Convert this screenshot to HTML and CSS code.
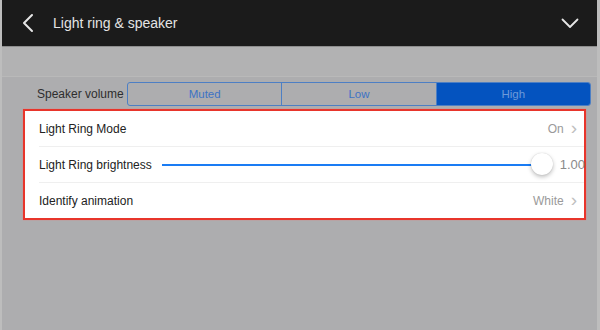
FILE: index.html
```html
<!DOCTYPE html>
<html>
<head>
    <meta name="viewport" content="width=device-width, initial-scale=1.0">
    <link rel="stylesheet" href="styles.css">
</head>
<body>
    <div class="screen">
        <!-- Top bar -->
        <div class="top-bar">
            <svg class="back-icon" width="12" height="20" viewBox="0 0 12 20">
                <path d="M10 2 L2 10 L10 18" fill="none" stroke="#e6e6e6" stroke-width="2" stroke-linecap="round" stroke-linejoin="round"/>
            </svg>
            <span class="title">Light ring &amp; speaker</span>
            <svg class="down-icon" width="18" height="11" viewBox="0 0 18 11">
                <path d="M1.5 1.5 L9 9 L16.5 1.5" fill="none" stroke="#e6e6e6" stroke-width="1.8" stroke-linecap="round" stroke-linejoin="round"/>
            </svg>
        </div>

        <div class="band"></div>

        <div class="content">
            <!-- Speaker volume -->
            <div class="volume-row">
                <span class="volume-label">Speaker volume</span>
                <div class="segments">
                    <div class="segment">Muted</div>
                    <div class="segment">Low</div>
                    <div class="segment selected">High</div>
                </div>
            </div>

            <!-- Highlighted settings -->
            <div class="card">
                <div class="row">
                    <span class="row-label">Light Ring Mode</span>
                    <span class="row-value">On <span class="chevron">&#8250;</span></span>
                </div>
                <div class="row">
                    <span class="row-label">Light Ring brightness</span>
                    <div class="slider">
                        <div class="track"></div>
                        <div class="thumb"></div>
                    </div>
                    <span class="slider-value">1.00</span>
                </div>
                <div class="row">
                    <span class="row-label">Identify animation</span>
                    <span class="row-value">White <span class="chevron">&#8250;</span></span>
                </div>
            </div>
        </div>
    </div>
</body>
</html>
```

FILE: styles.css
```css
body {
    margin: 0;
    background-color: #adadaf;
    font-family: "Liberation Sans", Arial, sans-serif;
}

.screen {
    height: 330px;
    border-left: 2px solid #bdbdbd;
    border-right: 3px solid #bdbdbd;
    display: flex;
    flex-direction: column;
}

/* Top bar */
.top-bar {
    height: 46px;
    background-color: #1b1b1b;
    border-bottom: 1px solid #8e8e8e;
    display: flex;
    align-items: center;
    padding: 0 18px 0 20px;
}

.back-icon {
    margin-right: 19px;
}

.title {
    color: #e4e4e4;
    font-size: 14px;
    flex: 1;
}

/* Dimmed empty band */
.band {
    height: 29px;
    background-color: #b2b2b3;
    border-bottom: 1px solid #b9b9b9;
}

.content {
    flex: 1;
    padding-top: 5px;
}

/* Speaker volume */
.volume-row {
    display: flex;
    align-items: center;
    padding-left: 35px;
    padding-right: 6px;
}

.volume-label {
    font-size: 12px;
    color: #2e2e2e;
    width: 90px;
    white-space: nowrap;
}

.segments {
    flex: 1;
    display: flex;
    height: 22px;
    border: 1px solid #4d7fc4;
    border-radius: 3px;
    overflow: hidden;
}

.segment {
    flex: 1;
    display: flex;
    align-items: center;
    justify-content: center;
    font-size: 11.5px;
    color: #3d73c4;
}

.segment + .segment {
    border-left: 1px solid #4d7fc4;
}

.segment.selected {
    background-color: #0453bf;
    color: #6d9ad9;
}

/* Highlighted card */
.card {
    margin: 3px 11px 0 21px;
    background-color: white;
    border: 2px solid #e8352b;
    box-shadow: 0 0 1px #f07a6f;
    padding-left: 14px;
}

.row {
    height: 35px;
    display: flex;
    align-items: center;
    padding-right: 7px;
    border-bottom: 1px solid #efefef;
}

.row:last-child {
    border-bottom: none;
}

.row-label {
    font-size: 12px;
    color: #222;
    white-space: nowrap;
}

.row-value {
    margin-left: auto;
    font-size: 12px;
    color: #9a9a9a;
    display: flex;
    align-items: center;
}

.chevron {
    font-size: 19px;
    color: #c0c0c0;
    margin-left: 7px;
    line-height: 1;
    padding-bottom: 3px;
}

/* Brightness slider */
.slider {
    position: relative;
    flex: 1;
    height: 24px;
    margin: 0 7px 0 10px;
}

.track {
    position: absolute;
    left: 0;
    right: 10px;
    top: 11px;
    height: 2px;
    background-color: #1a7cf4;
}

.thumb {
    position: absolute;
    right: 0;
    top: 0;
    width: 22px;
    height: 22px;
    border-radius: 50%;
    background-color: white;
    box-shadow: 0 2px 4px rgba(0, 0, 0, 0.25), 0 0 1px rgba(0, 0, 0, 0.2);
}

.slider-value {
    font-size: 13px;
    color: #8a8a8a;
    margin-right: -8px;
}
```
